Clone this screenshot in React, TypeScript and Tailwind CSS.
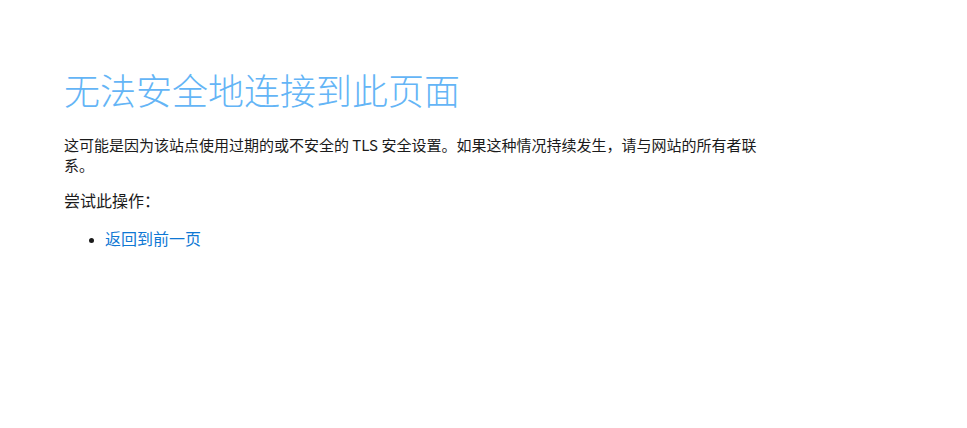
export default function App() {
  return (
    <div
      className="min-h-screen w-full bg-white pl-[64px] pt-[67px] text-[#1b1b1b]"
      style={{ fontFamily: '"Noto Sans CJK SC", "Noto Sans", sans-serif' }}
    >
      <div className="w-[700px]">
        <h1 className="text-[36px] leading-[44px] font-light text-[#64b5f6]">
          无法安全地连接到此页面
        </h1>
        <p className="mt-[24px] text-[15px] leading-[19.5px]">
          这可能是因为该站点使用过期的或不安全的 TLS 安全设置。如果这种情况持续发生，请与网站的所有者联系。
        </p>
        <p className="mt-[16px] text-[16px] leading-[20px]">尝试此操作：</p>
        <ul className="mt-[18px] list-disc pl-[41px] text-[16px] leading-[20px] marker:text-[12px]">
          <li>
            <a href="#" className="text-[#0f78d4]">
              返回到前一页
            </a>
          </li>
        </ul>
      </div>
    </div>
  );
}
